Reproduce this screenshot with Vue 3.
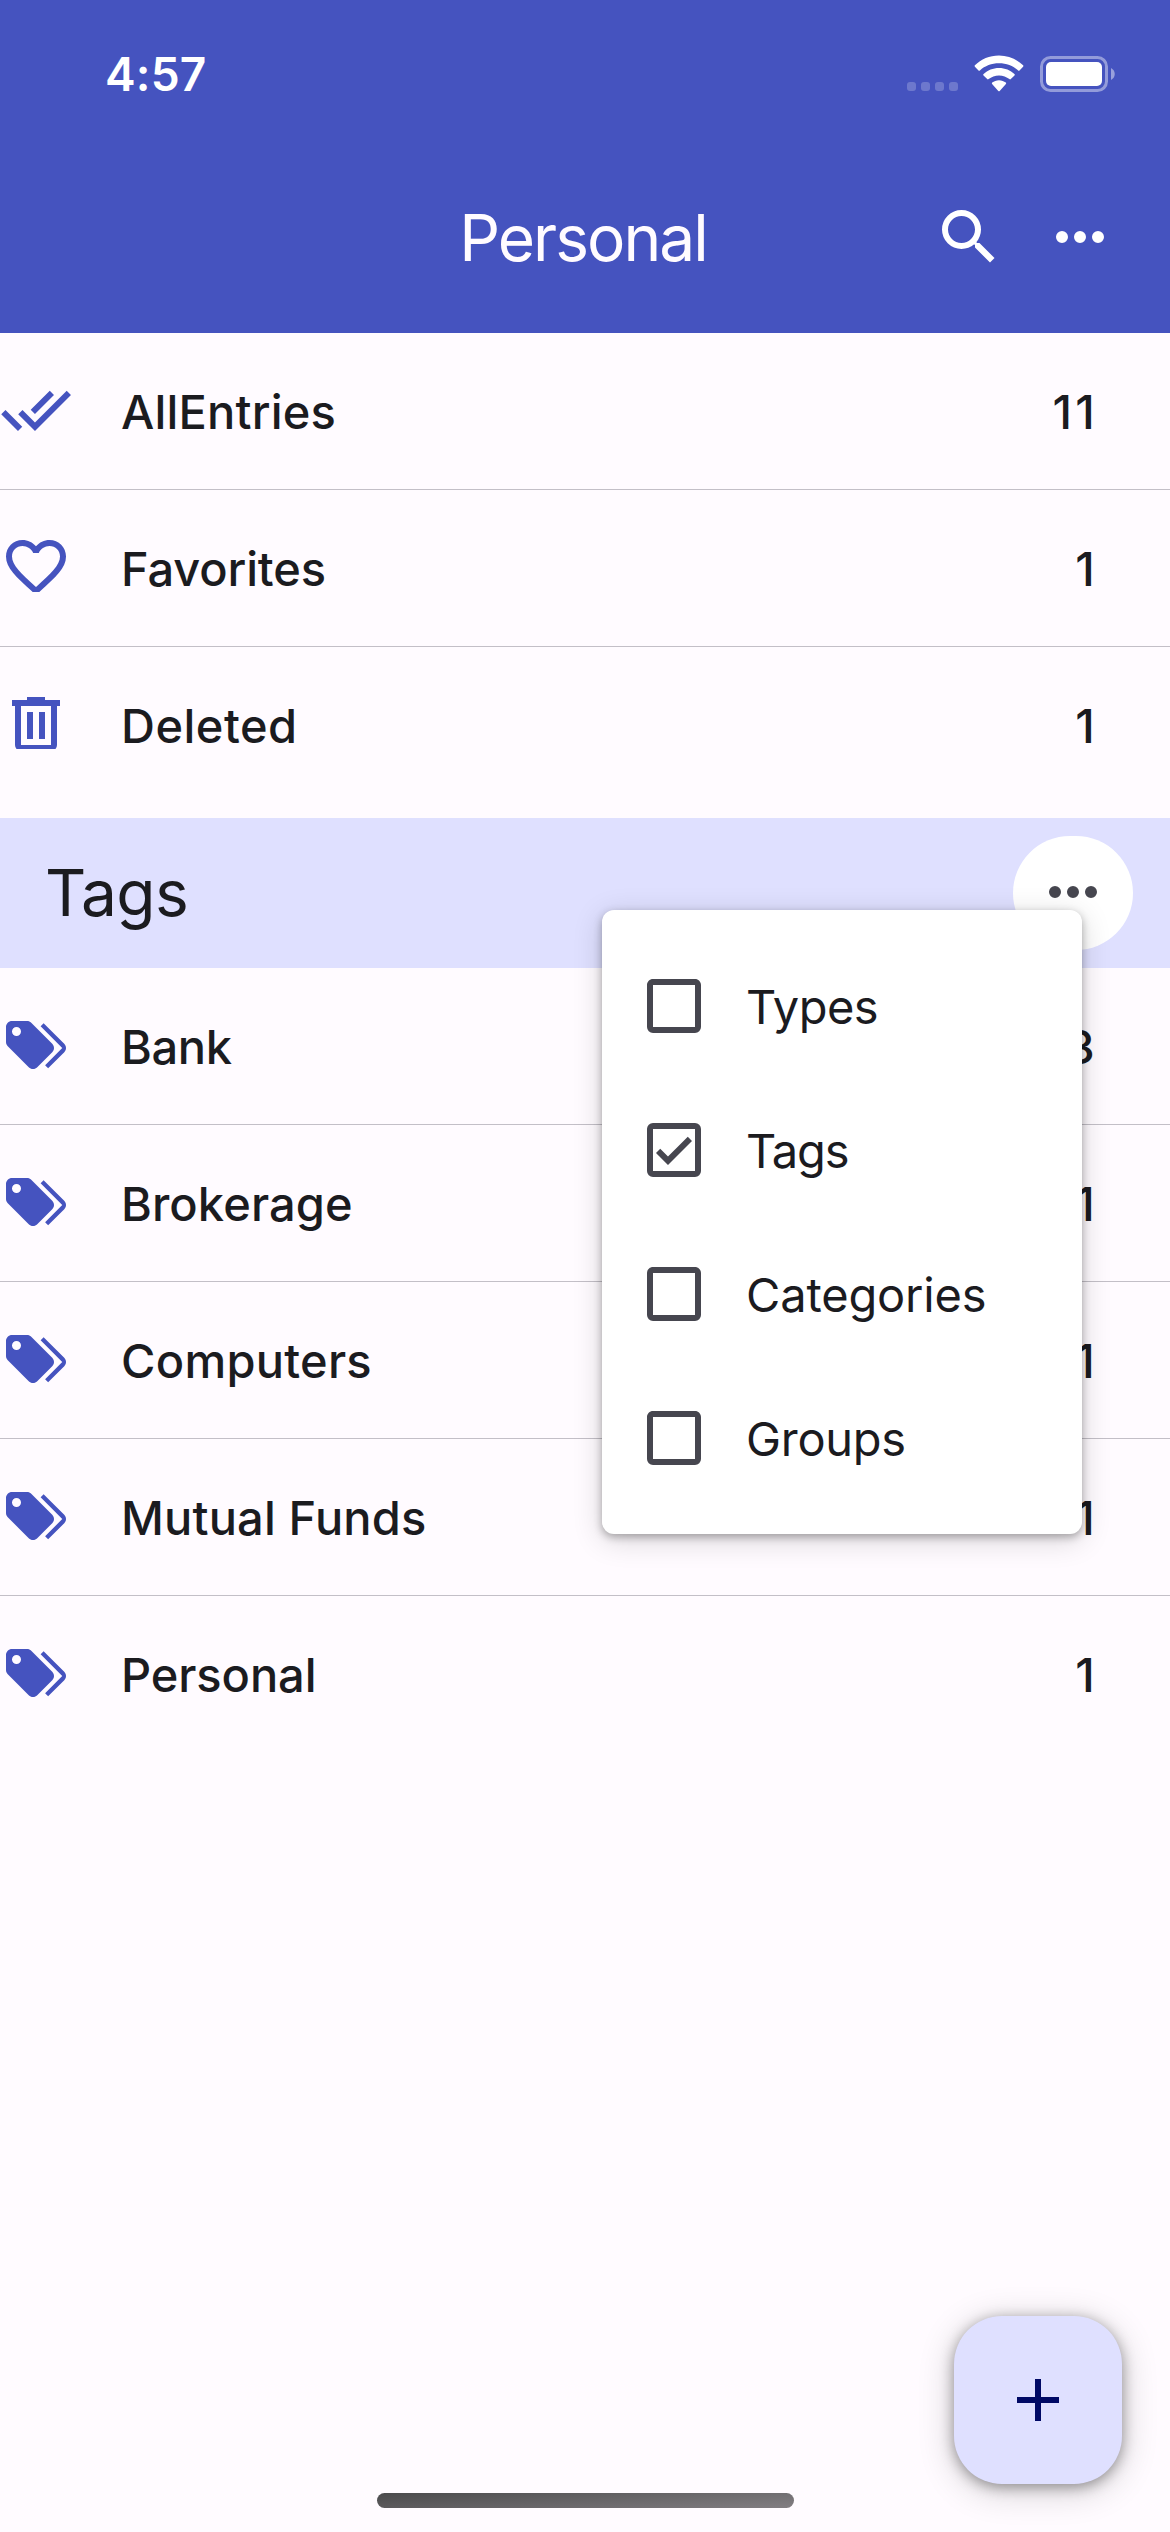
<script setup>
const paths = {
  all: 'M0.41,13.41L6,19L7.41,17.58L1.83,12M22.24,5.58L11.66,16.17L7.5,12L6.07,13.41L11.66,19L23.66,7M18,7L16.59,5.58L10.24,11.93L11.66,13.34L18,7Z',
  heart: 'M12.1,18.55L12,18.65L11.89,18.55C7.14,14.24 4,11.39 4,8.5C4,6.5 5.5,5 7.5,5C9.04,5 10.54,6 11.07,7.36H12.93C13.46,6 14.96,5 16.5,5C18.5,5 20,6.5 20,8.5C20,11.39 16.86,14.24 12.1,18.55M16.5,3C14.76,3 13.09,3.81 12,5.08C10.91,3.81 9.24,3 7.5,3C4.42,3 2,5.41 2,8.5C2,12.27 5.4,15.36 10.55,20.03L12,21.35L13.45,20.03C18.6,15.36 22,12.27 22,8.5C22,5.41 19.58,3 16.5,3Z',
  trash: 'M9,3V4H4V6H5V19A2,2 0 0,0 7,21H17A2,2 0 0,0 19,19V6H20V4H15V3H9M7,6H17V19H7V6M9,8V17H11V8H9M13,8V17H15V8H13Z',
  tags: 'M5.5,9A1.5,1.5 0 0,0 7,7.5A1.5,1.5 0 0,0 5.5,6A1.5,1.5 0 0,0 4,7.5A1.5,1.5 0 0,0 5.5,9M17.41,11.58C17.77,11.94 18,12.44 18,13C18,13.55 17.78,14.05 17.41,14.41L12.41,19.41C12.05,19.77 11.55,20 11,20C10.45,20 9.95,19.78 9.58,19.41L2.59,12.42C2.22,12.05 2,11.55 2,11V6C2,4.89 2.89,4 4,4H9C9.55,4 10.05,4.22 10.41,4.58L17.41,11.58M13.54,5.71L14.54,4.71L21.41,11.58C21.78,11.94 22,12.45 22,13C22,13.55 21.78,14.05 21.42,14.41L16.04,19.79L15.04,18.79L20.75,13L13.54,5.71Z',
  search: 'M9.5,3A6.5,6.5 0 0,1 16,9.5C16,11.11 15.41,12.59 14.44,13.73L14.71,14H15.5L20.5,19L19,20.5L14,15.5V14.71L13.73,14.44C12.59,15.41 11.11,16 9.5,16A6.5,6.5 0 0,1 3,9.5A6.5,6.5 0 0,1 9.5,3M9.5,5C7,5 5,7 5,9.5C5,12 7,14 9.5,14C12,14 14,12 14,9.5C14,7 12,5 9.5,5Z',
  dots: 'M16,12A2,2 0 0,1 18,10A2,2 0 0,1 20,12A2,2 0 0,1 18,14A2,2 0 0,1 16,12M10,12A2,2 0 0,1 12,10A2,2 0 0,1 14,12A2,2 0 0,1 12,14A2,2 0 0,1 10,12M4,12A2,2 0 0,1 6,10A2,2 0 0,1 8,12A2,2 0 0,1 6,14A2,2 0 0,1 4,12Z',
  box: 'M19,3H5C3.89,3 3,3.89 3,5V19A2,2 0 0,0 5,21H19A2,2 0 0,0 21,19V5C21,3.89 20.1,3 19,3M19,5V19H5V5H19Z',
  boxChecked: 'M19,3H5A2,2 0 0,0 3,5V19A2,2 0 0,0 5,21H19A2,2 0 0,0 21,19V5A2,2 0 0,0 19,3M19,5V19H5V5H19M10,17L6,13L7.41,11.58L10,14.17L16.59,7.58L18,9',
  plus: 'M19,13H13V19H11V13H5V11H11V5H13V11H19V13Z',
}

const general = [
  { label: 'AllEntries', count: 11, icon: 'all', tracking: 0.18 },
  { label: 'Favorites', count: 1, icon: 'heart', tracking: -0.15 },
  { label: 'Deleted', count: 1, icon: 'trash', tracking: 0.48 },
]

const tags = [
  { label: 'Bank', count: 3, icon: 'tags', tracking: -0.38 },
  { label: 'Brokerage', count: 1, icon: 'tags', tracking: 0.11 },
  { label: 'Computers', count: 1, icon: 'tags', tracking: 0.26 },
  { label: 'Mutual Funds', count: 1, icon: 'tags', tracking: 0.16 },
  { label: 'Personal', count: 1, icon: 'tags', tracking: -0.09 },
]

const options = [
  { label: 'Types', checked: false, tracking: -0.57 },
  { label: 'Tags', checked: true, tracking: -1.14 },
  { label: 'Categories', checked: false, tracking: -0.16 },
  { label: 'Groups', checked: false, tracking: -0.29 },
]
</script>

<template>
  <div class="screen">
    <header class="header">
      <div class="status">
        <span class="time">4:57</span>
        <div class="indicators">
          <div class="signal"><i v-for="n in 4" :key="n"></i></div>
          <svg class="wifi" width="50" height="38" viewBox="0 0 50 38" fill="#fff">
            <path d="M25,0.5C34.5,0.5 43,4.2 49.1,10.3C49.5,10.7 49.5,11.3 49.1,11.7L45.5,15.4C45.1,15.8 44.5,15.8 44.1,15.4C39.1,10.9 32.4,8.3 25,8.3C17.6,8.3 10.9,10.9 5.9,15.4C5.5,15.8 4.9,15.8 4.5,15.4L0.9,11.7C0.5,11.3 0.5,10.7 0.9,10.3C7,4.2 15.5,0.5 25,0.5Z" />
            <path d="M25,13C31,13 36.4,15.3 40.4,19C40.9,19.4 40.9,20 40.5,20.4L36.8,24.1C36.4,24.5 35.8,24.5 35.4,24.1C32.6,21.8 29,20.4 25,20.4C21,20.4 17.4,21.8 14.6,24.1C14.2,24.5 13.6,24.5 13.2,24.1L9.5,20.4C9.1,20 9.1,19.4 9.6,19C13.6,15.3 19,13 25,13Z" />
            <path d="M25,25.2C27.6,25.2 30,26.1 31.8,27.6C32.3,28 32.3,28.6 31.9,29L25.7,35.9C25.3,36.3 24.7,36.3 24.3,35.9L18.1,29C17.7,28.6 17.7,28 18.2,27.6C20,26.1 22.4,25.2 25,25.2Z" />
          </svg>
          <svg class="battery" width="76" height="36" viewBox="0 0 76 36">
            <rect x="1.5" y="1.5" width="65" height="33" rx="9" fill="none" stroke="#fff" stroke-opacity="0.42" stroke-width="3" />
            <rect x="6" y="6" width="56" height="24" rx="5" fill="#fff" />
            <path d="M71,12C76,14.5 76,21.5 71,24Z" fill="#fff" fill-opacity="0.45" />
          </svg>
        </div>
      </div>
      <div class="toolbar">
        <h1 class="title">Personal</h1>
        <div class="actions">
          <svg class="icon" viewBox="0 0 24 24"><path :d="paths.search" /></svg>
          <svg class="icon" viewBox="0 0 24 24"><path :d="paths.dots" /></svg>
        </div>
      </div>
    </header>

    <ul class="list">
      <li v-for="row in general" :key="row.label" class="row">
        <svg class="row-icon" viewBox="0 0 24 20.333"><path :d="paths[row.icon]" /></svg>
        <span class="label" :style="{ letterSpacing: row.tracking + 'px' }">{{ row.label }}</span>
        <span class="count">{{ row.count }}</span>
      </li>
    </ul>

    <section class="section">
      <h2 class="section-title">Tags</h2>
      <div class="more">
        <svg class="icon" viewBox="0 0 24 24"><path :d="paths.dots" /></svg>
      </div>
      <div class="menu">
        <div v-for="option in options" :key="option.label" class="option">
          <svg class="icon" viewBox="0 0 24 24"><path :d="option.checked ? paths.boxChecked : paths.box" /></svg>
          <span class="option-label" :style="{ letterSpacing: option.tracking + 'px' }">{{ option.label }}</span>
        </div>
      </div>
    </section>

    <ul class="list">
      <li v-for="row in tags" :key="row.label" class="row">
        <svg class="row-icon" viewBox="0 0 24 20.333"><path :d="paths[row.icon]" /></svg>
        <span class="label" :style="{ letterSpacing: row.tracking + 'px' }">{{ row.label }}</span>
        <span class="count">{{ row.count }}</span>
      </li>
    </ul>

    <footer class="footer">
      <button class="fab">
        <svg class="icon" viewBox="0 0 24 24"><path :d="paths.plus" /></svg>
      </button>
      <div class="home"></div>
    </footer>
  </div>
</template>

<style>
body {
  margin: 0;
  background: #fffbff;
}
</style>

<style scoped>
.screen {
  display: flex;
  flex-direction: column;
  width: 1170px;
  height: 2532px;
  overflow: hidden;
  background: #fffbff;
  color: #1b1b1f;
  font-family: Inter, "Liberation Sans", sans-serif;
}

.icon {
  display: block;
  width: 72px;
  height: 72px;
  fill: currentColor;
}

.header {
  display: flex;
  flex-direction: column;
  height: 333px;
  flex: none;
  background: #4553bf;
  color: #fff;
}

.status {
  display: flex;
  justify-content: space-between;
  height: 141px;
  padding: 0 54px 0 105px;
  box-sizing: border-box;
}

.time {
  margin-top: 46px;
  height: 56px;
  line-height: 56px;
  font-size: 46px;
  font-weight: 600;
  letter-spacing: 0.2px;
}

.indicators {
  display: flex;
  align-items: flex-start;
  padding-top: 55px;
}

.signal {
  display: flex;
  gap: 5px;
  margin: 27px 16px 0 0;
}

.signal i {
  width: 9px;
  height: 9px;
  border-radius: 3px;
  background: rgba(255, 255, 255, 0.22);
}

.wifi {
  display: block;
}

.battery {
  display: block;
  margin: 1px 0 0 16px;
}

.toolbar {
  display: grid;
  grid-template-columns: 1fr auto 1fr;
  align-items: center;
  height: 192px;
}

.title {
  grid-column: 2;
  margin: 2px 4px 0 0;
  font-size: 64px;
  line-height: 78px;
  font-weight: 400;
  letter-spacing: -1.95px;
  color: #fffbff;
}

.actions {
  display: flex;
  justify-content: flex-end;
  gap: 39px;
  padding-right: 54px;
}

.list {
  flex: none;
  margin: 0;
  padding: 0;
  list-style: none;
}

.row {
  display: flex;
  align-items: flex-start;
  height: 156px;
  padding-right: 72px;
}

.row + .row {
  border-top: 1px solid #c3bfc7;
}

.row-icon {
  display: block;
  flex: none;
  width: 72px;
  height: 61px;
  margin-top: 41px;
  overflow: hidden;
  fill: #4553bf;
}

.label,
.count {
  margin-top: 1px;
  line-height: 156px;
  font-size: 47px;
  font-weight: 500;
}

.label {
  flex: 1;
  margin-left: 49px;
}

.count {
  letter-spacing: 3.2px;
}

.section {
  position: relative;
  display: flex;
  align-items: center;
  justify-content: space-between;
  flex: none;
  height: 150px;
  margin-top: 15px;
  padding: 0 37px 0 45px;
  background: #dfe0ff;
}

.section-title {
  margin: 0;
  font-size: 64px;
  line-height: 78px;
  font-weight: 400;
  letter-spacing: -0.6px;
}

.more {
  display: flex;
  align-items: center;
  justify-content: center;
  width: 120px;
  height: 114px;
  padding-bottom: 2px;
  box-sizing: border-box;
  border-radius: 57px;
  background: #fff;
  color: #46464f;
}

.menu {
  position: absolute;
  z-index: 2;
  top: 92px;
  right: 88px;
  width: 480px;
  padding: 24px 0;
  box-sizing: border-box;
  border-radius: 12px;
  background: #fff;
  box-shadow: 0 3px 9px rgba(0, 0, 0, 0.3), 0 6px 30px rgba(0, 0, 0, 0.16);
}

.option {
  display: flex;
  align-items: center;
  height: 144px;
  padding-left: 36px;
  color: #46464f;
}

.option-label {
  margin: 2px 0 0 36px;
  font-size: 47px;
  line-height: 60px;
  color: #1b1b1f;
}

.footer {
  display: flex;
  flex-direction: column;
  align-items: center;
  margin-top: auto;
  padding-bottom: 24px;
}

.fab {
  display: flex;
  align-items: center;
  justify-content: center;
  align-self: flex-end;
  width: 168px;
  height: 168px;
  margin: 0 48px 9px 0;
  padding: 0;
  border: 0;
  border-radius: 48px;
  background: #dfe0ff;
  color: #000965;
  box-shadow: 0 3px 14px rgba(0, 0, 0, 0.36), 0 6px 36px rgba(0, 0, 0, 0.2);
}

.home {
  width: 417px;
  height: 15px;
  border-radius: 8px;
  background: linear-gradient(175deg, #4b4a4c, #827e82);
}
</style>
